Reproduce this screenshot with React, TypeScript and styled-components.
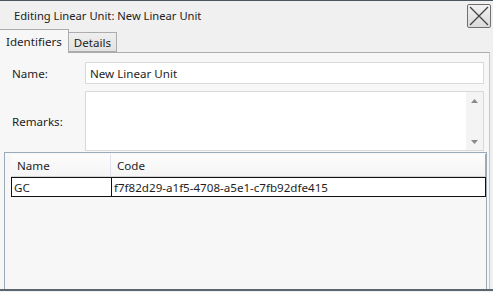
import React from "react";
import styled, { createGlobalStyle } from "styled-components";

const Global = createGlobalStyle`
  html, body { margin: 0; padding: 0; background: #f0f0f0; }
  body { width: 493px; height: 292px; overflow: hidden; }
  * { box-sizing: border-box; }
`;

const Window = styled.div`
  width: 493px;
  height: 292px;
  display: flex;
  flex-direction: column;
  background: #f0f0f0;
  border-top: 1px solid #4b5660;
  font-family: "Noto Sans", "Segoe UI", sans-serif;
  font-size: 11.6px;
  color: #1e1e1e;
`;

const TitleBar = styled.div`
  height: 28px;
  display: flex;
  align-items: center;
  justify-content: space-between;
  padding: 0 2px 0 14px;
`;

const Title = styled.span`
  font-size: 11.2px;
  color: #222;
  padding-top: 1px;
`;

const CloseButton = styled.button`
  width: 24px;
  height: 24px;
  padding: 0;
  margin-top: 1px;
  border: 1px solid #6f6f6f;
  border-radius: 2px;
  background: linear-gradient(#f2f2f2, #dadada);
  display: flex;
  align-items: center;
  justify-content: center;
`;

const TabStrip = styled.div`
  height: 23px;
  display: flex;
  align-items: flex-end;
  position: relative;
  z-index: 1;
`;

const Tab = styled.div<{ $active?: boolean }>`
  height: ${(p) => (p.$active ? "24px" : "20px")};
  margin-bottom: ${(p) => (p.$active ? "-1px" : "0")};
  padding: 0 ${(p) => (p.$active ? "6px" : "5px")};
  display: flex;
  align-items: center;
  border: 1px solid #acacac;
  border-bottom: ${(p) => (p.$active ? "none" : "1px solid #acacac")};
  border-left: ${(p) => (p.$active ? "none" : "0")};
  background: ${(p) => (p.$active ? "#f7f7f7" : "linear-gradient(#efefef, #e2e2e2)")};
  color: #1e1e1e;
`;

const Panel = styled.div`
  flex: 1;
  display: flex;
  flex-direction: column;
  border-top: 1px solid #acacac;
  border-right: 1px solid #c6c6c6;
  margin-right: 3px;
  background: #f7f7f7;
  padding: 9px 0 0 4px;
`;

const FormRow = styled.div<{ $h: number }>`
  display: grid;
  grid-template-columns: 81px 399px;
  align-items: center;
  height: ${(p) => p.$h}px;
  margin-bottom: 7px;
`;

const Label = styled.label`
  padding-left: 8px;
  color: #1e1e1e;
`;

const TextBox = styled.div`
  height: 100%;
  background: #fff;
  border: 1px solid #d9d9d9;
  padding-left: 4px;
  display: flex;
  align-items: center;
`;

const TextArea = styled.div`
  height: 100%;
  background: #fff;
  border: 1px solid #d9d9d9;
  display: flex;
  justify-content: flex-end;
`;

const ScrollCol = styled.div`
  width: 17px;
  display: flex;
  flex-direction: column;
  justify-content: space-between;
  align-items: center;
  padding: 7px 0 6px;
  background: #f4f4f4;
`;

const Grid = styled.div`
  flex: 1;
  margin: -6px 0 0 0;
  width: 483px;
  border: 1px solid #9aaab9;
  border-bottom: none;
  padding: 1px 0 0 6px;
  display: flex;
  flex-direction: column;
`;

const HeadRow = styled.div`
  display: grid;
  grid-template-columns: 100px 374px;
  height: 23px;
  background: linear-gradient(#fdfdfd, #f4f4f4);
  border-right: 1px solid #9aaab9;
`;

const HeadCell = styled.div<{ $first?: boolean }>`
  display: flex;
  align-items: center;
  padding-left: 6px;
  border-right: ${(p) => (p.$first ? "1px solid #e2e3ea" : "none")};
  border-bottom: 1px solid #d5d5d5;
`;

const DataRow = styled.div`
  display: grid;
  grid-template-columns: 100px 374px;
  height: 20px;
  background: #fff;
  border: 1px solid #111;
`;

const Cell = styled.div<{ $first?: boolean }>`
  display: flex;
  align-items: center;
  padding-left: ${(p) => (p.$first ? "2px" : "3px")};
  border-right: ${(p) => (p.$first ? "1px solid #111" : "none")};
  margin-left: ${(p) => (p.$first ? "0" : "-1px")};
`;

const BottomEdge = styled.div`
  height: 3px;
  border-top: 2px solid #5a6670;
`;

const Triangle = ({ down }: { down?: boolean }) => (
  <svg width="7" height="4" viewBox="0 0 7 4">
    <path d={down ? "M0 0h7L3.5 4z" : "M3.5 0L7 4H0z"} fill="#8a8a8a" />
  </svg>
);

export default function App() {
  return (
    <>
      <Global />
      <Window>
        <TitleBar>
          <Title>Editing Linear Unit: New Linear Unit</Title>
          <CloseButton aria-label="Close">
            <svg width="22" height="22" viewBox="0 0 22 22">
              <path d="M2 2L20 20M20 2L2 20" stroke="#444" strokeWidth="1.3" />
            </svg>
          </CloseButton>
        </TitleBar>
        <TabStrip>
          <Tab $active>Identifiers</Tab>
          <Tab>Details</Tab>
        </TabStrip>
        <Panel>
          <FormRow $h={22}>
            <Label>Name:</Label>
            <TextBox>New Linear Unit</TextBox>
          </FormRow>
          <FormRow $h={60}>
            <Label>Remarks:</Label>
            <TextArea>
              <ScrollCol>
                <Triangle />
                <Triangle down />
              </ScrollCol>
            </TextArea>
          </FormRow>
          <Grid>
            <HeadRow>
              <HeadCell $first>Name</HeadCell>
              <HeadCell>Code</HeadCell>
            </HeadRow>
            <DataRow>
              <Cell $first>GC</Cell>
              <Cell>f7f82d29-a1f5-4708-a5e1-c7fb92dfe415</Cell>
            </DataRow>
          </Grid>
        </Panel>
        <BottomEdge />
      </Window>
    </>
  );
}
